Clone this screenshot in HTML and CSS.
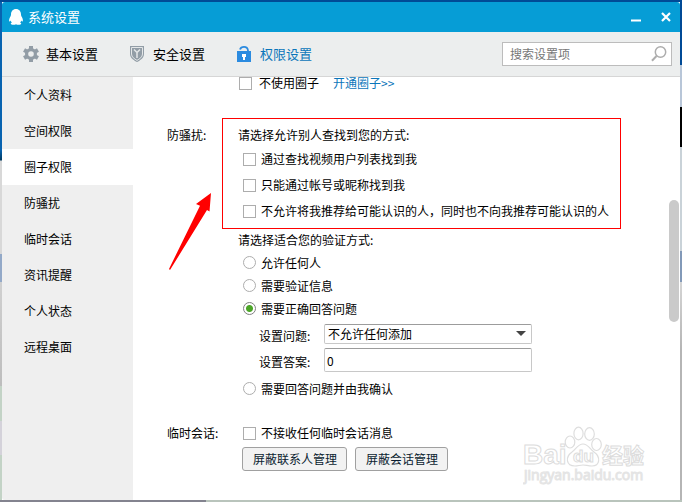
FILE: index.html
```html
<!DOCTYPE html>
<html lang="zh-CN">
<head>
<meta charset="utf-8">
<title>系统设置</title>
<link rel="stylesheet" href="styles.css">
</head>
<body>
<div class="window">
  <header class="titlebar">
    <svg class="penguin" viewBox="0 0 16 18" aria-hidden="true"><path fill="#fff" d="M8 1C4.800 1 3 3.400 3 6.500c0 1-.5 1.800-1.100 3C1 11.200.8 13.300 1.500 13.400c.5.100 1-.6 1.300-1 .2.900.5 1.500 1 2.100-.8.500-1.200 1-1 1.600.5.900 4 .9 5.200.1 1.200.8 4.700.8 5.200-.1.200-.6-.2-1.100-1-1.600.5-.6.800-1.200 1-2.100.3.400.8 1.100 1.300 1 .7-.1.500-2.200-.4-3.900-.6-1.200-1.100-2-1.100-3C13 3.400 11.200 1 8 1z"/></svg>
    <h1 class="title">系统设置</h1>
    <button class="winbtn" type="button" aria-label="最小化"><svg viewBox="0 0 12 12"><path d="M1 9.500h10" stroke="#fff" stroke-width="2"/></svg></button>
    <button class="winbtn" type="button" aria-label="关闭"><svg viewBox="0 0 12 12"><path d="M2 2l8 8M10 2l-8 8" stroke="#fff" stroke-width="2.200"/></svg></button>
  </header>

  <div class="toolbar">
    <nav class="tabs">
      <a class="tab" href="#basic"><svg viewBox="0 0 16 16" aria-hidden="true"><g fill="#929da6"><path fill-rule="evenodd" d="M8 2a6 6 0 1 0 0 12A6 6 0 0 0 8 2zm0 3.200a2.800 2.800 0 1 1 0 5.600 2.800 2.800 0 0 1 0-5.600z"/><path id="t" d="M6 0h4v3H6z"/><use href="#t" transform="rotate(60 8 8)"/><use href="#t" transform="rotate(120 8 8)"/><use href="#t" transform="rotate(180 8 8)"/><use href="#t" transform="rotate(240 8 8)"/><use href="#t" transform="rotate(300 8 8)"/></g></svg>基本设置</a>
      <a class="tab" href="#security"><svg viewBox="0 0 16 16" aria-hidden="true"><path fill="#929da6" d="M0 0h14v8c0 4-4 6.500-7 8-3-1.500-7-4-7-8z"/><path fill="none" stroke="#e4e7e8" d="M1.500 1.500h11V8c0 3-3 5-5.500 6.400C4.500 13 1.500 11 1.500 8z"/><path fill="none" stroke="#e4e7e8" stroke-width="1.500" d="M4 3.500l3 3 3-3M7 6.500V12"/></svg>安全设置</a>
      <a class="tab current" href="#privacy"><svg viewBox="0 0 16 16" aria-hidden="true"><path fill="none" stroke="#2b8be0" stroke-width="1.800" d="M3 3.500C3.600 1.700 5 .9 7 .9S10.700 2 11 4.500V6"/><path fill="#2b8be0" d="M0 5h14v11H0z"/><path fill="#fff" d="M5 8h4v3H8v3H6v-3H5z"/></svg>权限设置</a>
    </nav>
    <label class="search">
      <input type="text" placeholder="搜索设置项" aria-label="搜索设置项">
      <svg viewBox="0 0 16 16" aria-hidden="true"><g fill="none" stroke="#adadad" stroke-width="1.500"><circle cx="9.500" cy="6" r="5.200"/><path stroke-width="2" d="M5.500 10L1 14.700"/></g></svg>
    </label>
  </div>

  <div class="body">
    <nav class="side">
      <a href="#profile">个人资料</a>
      <a href="#zone">空间权限</a>
      <a class="active" href="#circle">圈子权限</a>
      <a href="#disturb">防骚扰</a>
      <a href="#temp">临时会话</a>
      <a href="#news">资讯提醒</a>
      <a href="#status">个人状态</a>
      <a href="#remote">远程桌面</a>
    </nav>

    <main class="panel">
      <section class="section circle">
        <div class="content row first"><input type="checkbox" id="nocircle"><label for="nocircle">不使用圈子</label><a class="link" href="#open">开通圈子&gt;&gt;</a></div>
      </section>

      <section class="section disturb">
        <h2 class="name">防骚扰:</h2>
        <div class="content">
          <div class="marked">
            <p class="legend">请选择允许别人查找到您的方式:</p>
            <div class="row"><input type="checkbox" id="f1"><label for="f1">通过查找视频用户列表找到我</label></div>
            <div class="row"><input type="checkbox" id="f2"><label for="f2">只能通过帐号或昵称找到我</label></div>
            <div class="row"><input type="checkbox" id="f3"><label for="f3">不允许将我推荐给可能认识的人，同时也不向我推荐可能认识的人</label></div>
          </div>
          <div class="verify">
            <p class="legend">请选择适合您的验证方式:</p>
            <div class="row"><input type="radio" name="v" id="v1"><label for="v1">允许任何人</label></div>
            <div class="row"><input type="radio" name="v" id="v2"><label for="v2">需要验证信息</label></div>
            <div class="row"><input type="radio" name="v" id="v3" checked><label for="v3">需要正确回答问题</label></div>
            <div class="fields">
              <label for="q">设置问题:</label>
              <div class="selectbox"><select id="q"><option>不允许任何添加</option></select></div>
              <label for="a">设置答案:</label>
              <input type="text" id="a" value="0">
            </div>
            <div class="row"><input type="radio" name="v" id="v4"><label for="v4">需要回答问题并由我确认</label></div>
          </div>
        </div>
        <svg class="arrow" viewBox="0 0 44 80" aria-hidden="true"><path fill="#f00" d="M43 1L28 12l4 1.700L1 77l1 1L39 18l2.500 1.500z"/></svg>
      </section>

      <section class="section temp">
        <h2 class="name">临时会话:</h2>
        <div class="content inner">
          <div class="row"><input type="checkbox" id="t1"><label for="t1">不接收任何临时会话消息</label></div>
          <div class="buttons"><button type="button">屏蔽联系人管理</button><button type="button">屏蔽会话管理</button></div>
        </div>
      </section>

      <svg class="watermark" viewBox="0 0 124 62" role="img" aria-label="Baidu 经验">
        <g fill="#fff" stroke="#dedede" stroke-width="1.200">
          <ellipse cx="47" cy="17" rx="4.800" ry="6"/><ellipse cx="55.500" cy="8.500" rx="4.600" ry="6.300"/><ellipse cx="66.500" cy="9" rx="4.800" ry="6.300"/><ellipse cx="73.500" cy="19.500" rx="4.800" ry="6"/>
          <path d="M60 19c-5 0-7 5-11 8-7 5-6 14 3 14 3 0 5-1 8-1s5 1 9 1c8 0 9-9 2-14-4-3-6-8-11-8z"/>
        </g>
        <g class="wm-text">
          <text x="0" y="39" font-size="28">Bai</text>
          <text x="50" y="37" font-size="17">du</text>
          <text x="79" y="38" font-size="21">经验</text>
          <text class="url" x="1" y="55" font-size="14">jingyan.baidu.com</text>
        </g>
      </svg>
    </main>
    <div class="scroll"><div class="thumb"></div></div>
  </div>
</div>
</body>
</html>
```
FILE: styles.css
```css
* { box-sizing: border-box; }

body {
  margin: 0;
  padding: 2px;
  min-height: 100vh;
  display: flex;
  font: 12px/16px "Noto Sans CJK SC", sans-serif;
  color: #000;
  background:
    linear-gradient(#004a96, #004a96) top / 100% 2px no-repeat,
    linear-gradient(90deg, #83838f 206px, #b9c4bc 206px) bottom / 100% 2px no-repeat,
    linear-gradient(#0863b0 150px, #003b62 160px, #d8d8d8 161px, #d8d8d8 254px, #93a9c8 254px, #93a9c8 282px, #d0d0d0 282px, #bdbdbd 386px, #c3d3c6 386px, #c3d3c6 421px, #d4d2da 421px, #d4d2da 455px, #c3d3c6 455px) left / 2px 100% no-repeat,
    linear-gradient(#004a96 65px, #b8c6d8 65px, #b8c6d8 107px, #000 107px, #000 147px, #c9d2d8 147px, #c9d2d8 251px, #8299b8 251px, #8299b8 282px, #d5d5d5 282px, #b5b5b5 350px) right / 2px 100% no-repeat;
}

a { color: inherit; text-decoration: none; }
h1, h2, p { margin: 0; font-size: inherit; font-weight: 400; }
input, select, button { font: inherit; color: inherit; margin: 0; }

.window {
  flex: 1;
  display: flex;
  flex-direction: column;
  border-radius: 3px;
  overflow: hidden;
  background: #fff;
}

.titlebar {
  height: 30px;
  display: flex;
  align-items: center;
  gap: 4px;
  padding: 0 8px 0 6px;
  background: #069dd6;
  color: #fff;
}
.penguin { width: 16px; height: 18px; }
.title { flex: 1; font-size: 13px; }
.winbtn {
  width: 12px;
  height: 12px;
  padding: 0;
  border: 0;
  background: none;
}
.winbtn + .winbtn { margin-left: 14px; }
.winbtn svg { display: block; }

.toolbar {
  height: 45px;
  display: flex;
  align-items: center;
  justify-content: space-between;
  padding: 0 8px 0 21px;
  background: #eceeee;
  border-bottom: 1px solid #d6d6d6;
}
.tabs { display: flex; gap: 32px; }
.tab {
  display: flex;
  align-items: center;
  gap: 7px;
  font-size: 13px;
}
.tab svg { width: 16px; height: 16px; }
.current { color: #0b76ba; }
.search {
  width: 170px;
  height: 24px;
  display: flex;
  align-items: center;
  padding: 0 4px 0 7px;
  background: #fff;
  border: 1px solid #bcbcbc;
}
.search input {
  flex: 1;
  min-width: 0;
  padding: 0;
  border: 0;
  outline: 0;
  background: none;
}
.search input::placeholder { color: #777; opacity: 1; }
.search svg { width: 16px; height: 16px; }

.body { flex: 1; display: flex; }
.side {
  width: 131px;
  display: flex;
  flex-direction: column;
  background: #efefef;
}
.side a { padding: 10px 22px; }
.side .active { background: #fff; }

.panel {
  position: relative;
  flex: 1;
  padding-left: 34px;
  overflow: hidden;
}
.section { display: grid; grid-template-columns: 55px 1fr; }
.name { line-height: 22px; }
.content { grid-column: 2; }
.circle { margin-top: -4px; }
.disturb { position: relative; margin-top: 25px; }
.disturb > .name { padding-top: 6px; }
.temp { margin-top: 20px; }
.temp > .name { line-height: 26px; }

.marked {
  width: fit-content;
  padding: 5px 11px 4px 15px;
  border: 1px solid #f00;
}
.verify { padding-left: 16px; }
.legend { line-height: 22px; }
.row {
  height: 26px;
  display: flex;
  align-items: center;
  gap: 5px;
  padding-left: 5px;
  white-space: nowrap;
}
.verify .row { height: 23px; }
.first { height: 20px; padding-left: 17px; gap: 7px; }
.link { color: #0b76ba; margin-left: 7px; }
.inner { padding-left: 16px; }

input[type="checkbox"], input[type="radio"] {
  appearance: none;
  width: 13px;
  height: 13px;
  border: 1px solid #adadad;
  background: #fff;
}
input[type="radio"] { border-radius: 50%; }
input[type="radio"]:checked {
  border-color: #808080;
  background: radial-gradient(circle, #4ca528 3px, #fff 4px);
}

.fields {
  display: grid;
  grid-template-columns: 65px 208px;
  grid-template-rows: 20px 24px;
  gap: 4px 0;
  align-items: center;
  padding: 4px 0 5px 21px;
}
.fields label { padding-top: 4px; }
.fields select, .fields input {
  width: 100%;
  height: 100%;
  padding: 0 3px;
  border: 1px solid #c8c8c8;
  border-top-color: #9c9c9c;
  border-radius: 2px;
  background: #fff;
  appearance: none;
}
.fields input { padding: 0 2px; }
.selectbox { position: relative; height: 20px; }
.selectbox::after {
  content: "";
  position: absolute;
  right: 6px;
  top: 7px;
  border: 5px solid transparent;
  border-top-color: #444;
  border-bottom: 0;
  pointer-events: none;
}

.buttons { display: flex; gap: 8px; padding: 1px 0 0 4px; }
.buttons button {
  height: 24px;
  padding: 0 9px 0 10px;
  line-height: 20px;
  color: #0b1d30;
  background: #f2f2f2;
  border: 1px solid #a0a0a0;
  border-radius: 3px;
}

.arrow {
  position: absolute;
  left: 1px;
  top: 74px;
  width: 44px;
  height: 80px;
}
.watermark {
  position: absolute;
  right: 21px;
  bottom: 13px;
  width: 124px;
  height: 62px;
}
.wm-text {
  font-family: "Liberation Sans", "Noto Sans CJK SC", sans-serif;
  font-weight: 700;
  fill: #fff;
  stroke: #dcdcdc;
}
.wm-text .url {
  font-family: "Open Sans", sans-serif;
  font-weight: 400;
  fill: #f4f4f4;
  stroke: #e4e4e4;
}

.scroll { width: 12px; padding-right: 1px; }
.thumb {
  width: 10px;
  height: 122px;
  margin: 123px 0 0 1px;
  border-radius: 5px;
  background: #cacaca;
}
```
